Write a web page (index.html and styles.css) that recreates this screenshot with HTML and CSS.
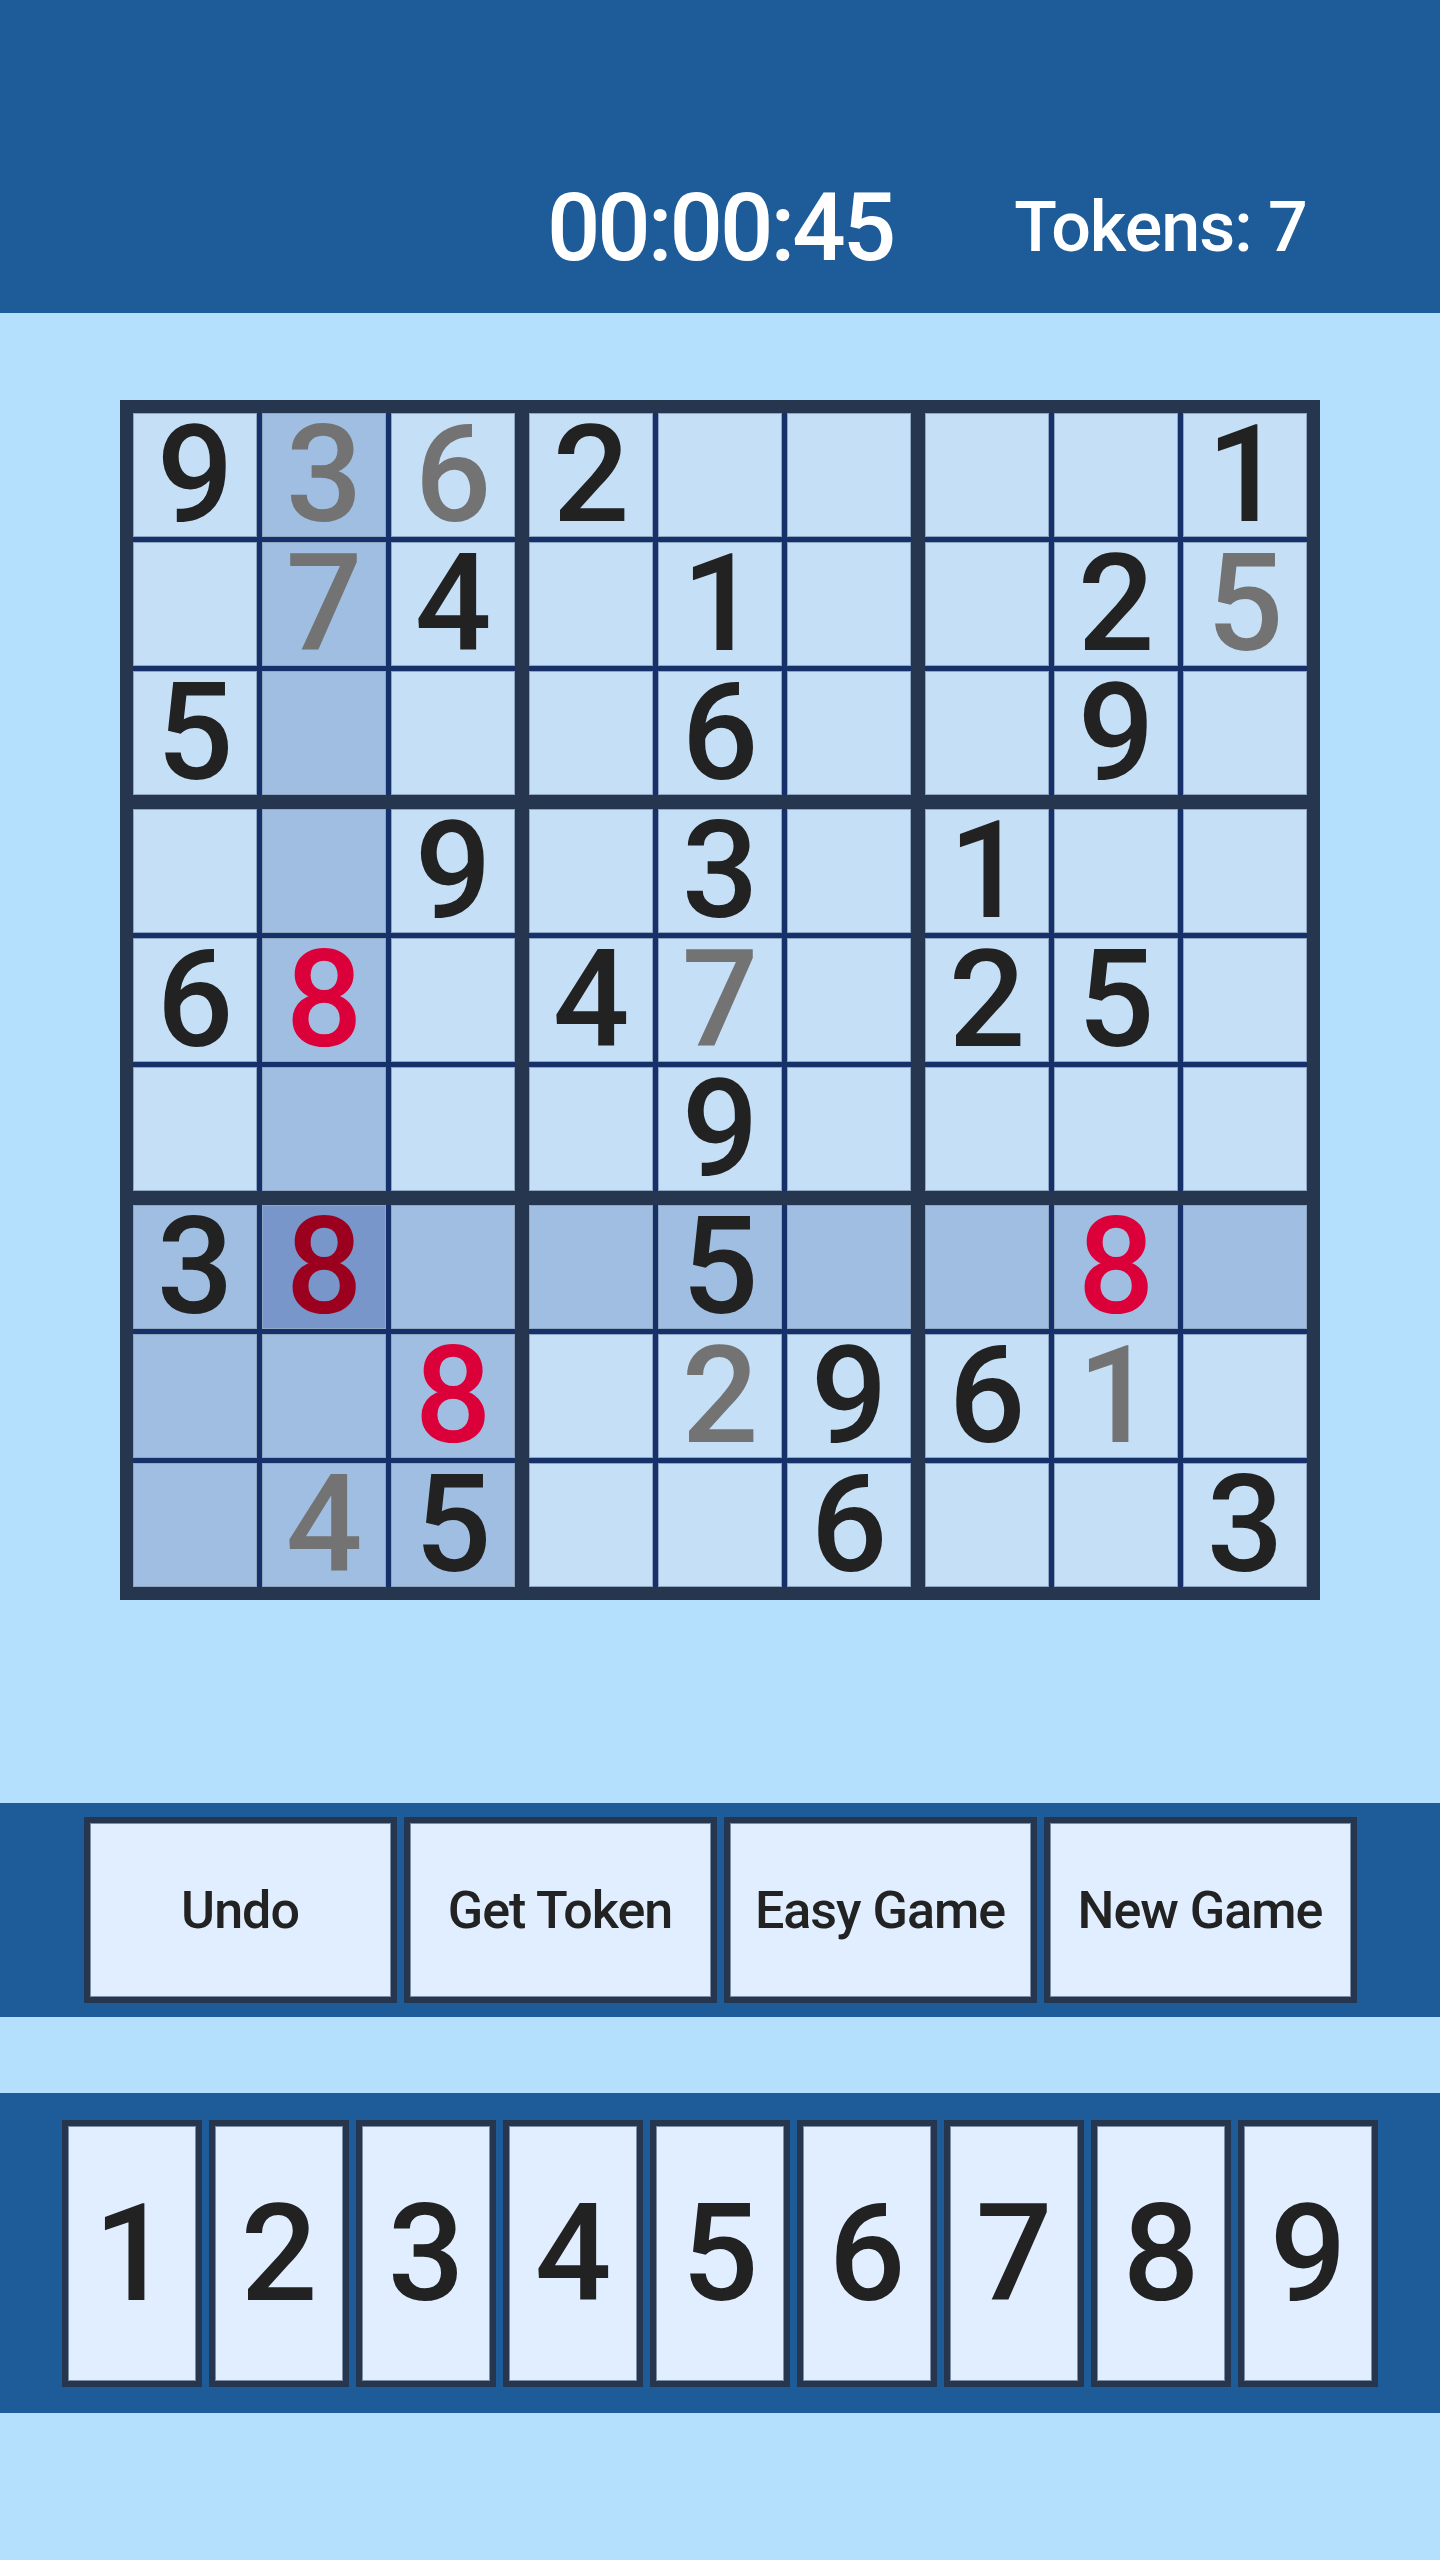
FILE: index.html
```html
<!DOCTYPE html>
<html lang="en">
<head>
    <meta charset="UTF-8">
    <title>Sudoku</title>
    <link rel="stylesheet" href="styles.css">
</head>
<body>
<header class="top-bar">
    <div class="timer">00:00:45</div>
    <div class="tokens">Tokens: 7</div>
</header>

<div class="board">
    <div class="box">
        <div class="cell">9</div>
        <div class="cell hl hint">3</div>
        <div class="cell hint">6</div>
        <div class="cell"></div>
        <div class="cell hl hint">7</div>
        <div class="cell">4</div>
        <div class="cell">5</div>
        <div class="cell hl"></div>
        <div class="cell"></div>
    </div>
    <div class="box">
        <div class="cell">2</div>
        <div class="cell"></div>
        <div class="cell"></div>
        <div class="cell"></div>
        <div class="cell">1</div>
        <div class="cell"></div>
        <div class="cell"></div>
        <div class="cell">6</div>
        <div class="cell"></div>
    </div>
    <div class="box">
        <div class="cell"></div>
        <div class="cell"></div>
        <div class="cell">1</div>
        <div class="cell"></div>
        <div class="cell">2</div>
        <div class="cell hint">5</div>
        <div class="cell"></div>
        <div class="cell">9</div>
        <div class="cell"></div>
    </div>
    <div class="box">
        <div class="cell"></div>
        <div class="cell hl"></div>
        <div class="cell">9</div>
        <div class="cell">6</div>
        <div class="cell hl wrong">8</div>
        <div class="cell"></div>
        <div class="cell"></div>
        <div class="cell hl"></div>
        <div class="cell"></div>
    </div>
    <div class="box">
        <div class="cell"></div>
        <div class="cell">3</div>
        <div class="cell"></div>
        <div class="cell">4</div>
        <div class="cell hint">7</div>
        <div class="cell"></div>
        <div class="cell"></div>
        <div class="cell">9</div>
        <div class="cell"></div>
    </div>
    <div class="box">
        <div class="cell">1</div>
        <div class="cell"></div>
        <div class="cell"></div>
        <div class="cell">2</div>
        <div class="cell">5</div>
        <div class="cell"></div>
        <div class="cell"></div>
        <div class="cell"></div>
        <div class="cell"></div>
    </div>
    <div class="box">
        <div class="cell hl">3</div>
        <div class="cell sel wrong">8</div>
        <div class="cell hl"></div>
        <div class="cell hl"></div>
        <div class="cell hl"></div>
        <div class="cell hl wrong">8</div>
        <div class="cell hl"></div>
        <div class="cell hl hint">4</div>
        <div class="cell hl">5</div>
    </div>
    <div class="box">
        <div class="cell hl"></div>
        <div class="cell hl">5</div>
        <div class="cell hl"></div>
        <div class="cell"></div>
        <div class="cell hint">2</div>
        <div class="cell">9</div>
        <div class="cell"></div>
        <div class="cell"></div>
        <div class="cell">6</div>
    </div>
    <div class="box">
        <div class="cell hl"></div>
        <div class="cell hl wrong">8</div>
        <div class="cell hl"></div>
        <div class="cell">6</div>
        <div class="cell hint">1</div>
        <div class="cell"></div>
        <div class="cell"></div>
        <div class="cell"></div>
        <div class="cell">3</div>
    </div>
</div>

<div class="actions">
    <button class="action-btn">Undo</button>
    <button class="action-btn">Get Token</button>
    <button class="action-btn">Easy Game</button>
    <button class="action-btn">New Game</button>
</div>

<div class="numpad">
    <button class="num-key">1</button>
    <button class="num-key">2</button>
    <button class="num-key">3</button>
    <button class="num-key">4</button>
    <button class="num-key">5</button>
    <button class="num-key">6</button>
    <button class="num-key">7</button>
    <button class="num-key">8</button>
    <button class="num-key">9</button>
</div>
</body>
</html>
```

FILE: styles.css
```css
*{
    margin: 0;
    padding: 0;
    box-sizing: border-box;
}
body{
    background: #b4e0fe;
    font-family: Roboto, "Noto Sans", sans-serif;
    color: #222;
}

/* top bar */
.top-bar{
    height: 313px;
    background: #1e5c99;
    color: #fff;
    display: grid;
    grid-template-columns: 1fr auto 1fr;
    align-items: start;
    padding-top: 181px;
}
.timer{
    grid-column: 2;
    font-size: 94px;
    line-height: 1;
    font-weight: 500;
    letter-spacing: -3px;
}
.tokens{
    grid-column: 3;
    justify-self: center;
    margin-top: 11px;
    margin-right: 12px;
    font-size: 70px;
    line-height: 1;
    font-weight: 500;
    letter-spacing: -1px;
}

/* board */
.board{
    width: 1200px;
    height: 1200px;
    margin: 87px auto 0;
    padding: 13px;
    background: #26364e;
    display: grid;
    grid-template-columns: repeat(3, 1fr);
    grid-template-rows: repeat(3, 1fr);
    gap: 14px;
}
.box{
    background: #16306a;
    display: grid;
    grid-template-columns: repeat(3, 1fr);
    grid-template-rows: repeat(3, 1fr);
    gap: 5px;
}
.cell{
    background: #c5dff6;
    box-shadow: inset 0 0 0 1px #8fa6c2;
    text-align: center;
    font-size: 135px;
    line-height: 124px;
    font-weight: 500;
    color: #222;
}
.cell.hl{
    background: #a0bee1;
}
.cell.sel{
    background: #7896c9;
}
.cell.hint{
    color: #737373;
}
.cell.wrong{
    color: #dc003a;
}
.cell.sel.wrong{
    color: #9b001f;
}

/* action buttons */
.actions{
    margin-top: 203px;
    background: #1e5c99;
    padding: 14px 0;
    display: flex;
    justify-content: center;
    gap: 7px;
}
.action-btn{
    width: 313px;
    height: 186px;
    border: 6px solid #26364e;
    box-shadow: inset 0 0 0 1px #7d8ea5;
    background: #e0eeff;
    font-family: Roboto, "Noto Sans", sans-serif;
    font-size: 52px;
    font-weight: 500;
    color: #222;
    letter-spacing: -1px;
}

/* number pad */
.numpad{
    margin-top: 76px;
    background: #1e5c99;
    padding: 27px 0 26px;
    display: flex;
    justify-content: center;
    gap: 7px;
}
.num-key{
    width: 140px;
    height: 267px;
    border: 6px solid #26364e;
    box-shadow: inset 0 0 0 1px #7d8ea5;
    background: #e0eeff;
    font-family: Roboto, "Noto Sans", sans-serif;
    font-size: 135px;
    font-weight: 500;
    color: #222;
}
```
